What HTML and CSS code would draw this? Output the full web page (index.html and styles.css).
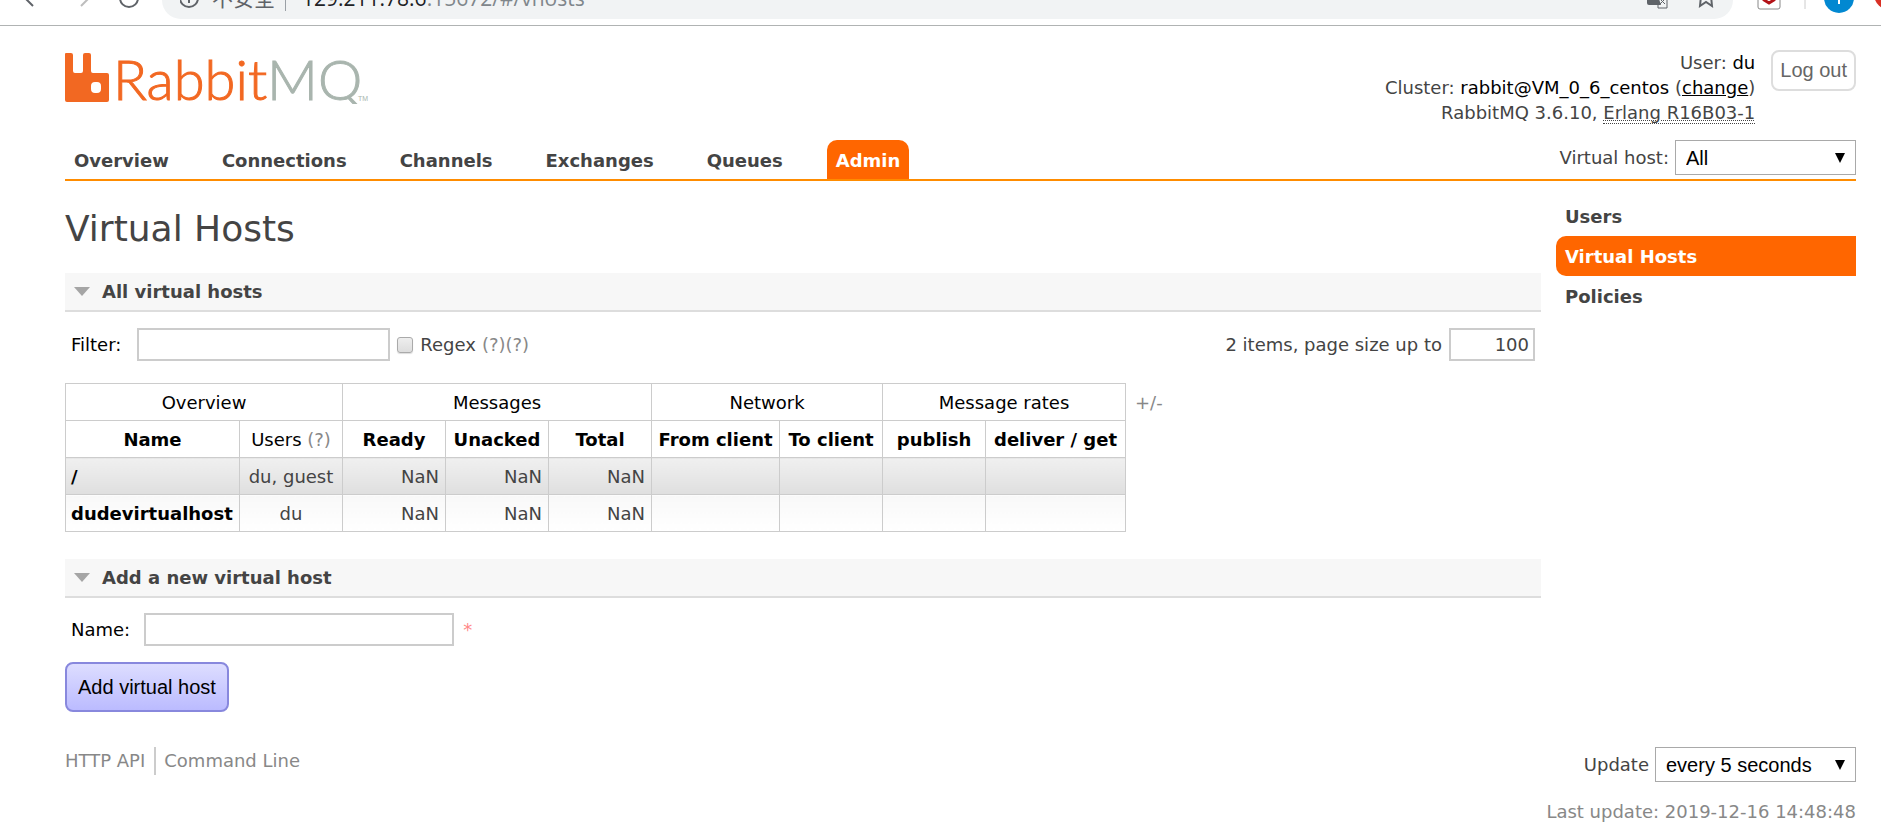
FILE: index.html
```html
<!DOCTYPE html>
<html lang="en">
<head>
<meta charset="utf-8">
<title>RabbitMQ Management</title>
<link rel="stylesheet" href="styles.css">
</head>
<body>
<div class="toolbar">
  <svg class="toolbar-nav" viewBox="0 0 150 20" width="150" height="20" fill="none" stroke-width="2" aria-hidden="true">
    <path d="M33 6L25-2" stroke="#5f6368"/>
    <path d="M81 6L89-2" stroke="#bdbdbd"/>
    <path d="M120-2A9 9 0 0 0 138-2" stroke="#5f6368"/>
  </svg>
  <div class="address">
    <svg class="info" viewBox="0 0 20 20" width="20" height="20" fill="none" stroke="#5f6368" stroke-width="2" aria-hidden="true">
      <circle cx="9" cy="-2" r="9"/><path d="M9-2V3"/>
    </svg>
    <span class="address-text"><span class="insecure">不安全</span><span class="bar"></span><span class="host">129.211.78.6</span>:15672/#/vhosts</span>
    <svg class="address-icons" viewBox="0 0 80 20" width="80" height="20" aria-hidden="true">
      <path d="M0-4H11L14 5H2Q0 5 0 3Z" fill="#5f6368"/><path d="M13 4L17 0M13-1L18 4M11 5V8H20V-2" fill="none" stroke="#5f6368"/>
      <path d="M54-4L53 6L59 2L65 6L64-4" fill="none" stroke="#5f6368" stroke-width="2"/>
    </svg>
  </div>
  <svg class="toolbar-extras" viewBox="0 0 148 20" width="148" height="20" aria-hidden="true">
    <path d="M25-2V7Q25 9 27 9H45Q47 9 47 7V-2" fill="none" stroke="#888"/>
    <path d="M31-2V0L36 3L41 0V-2" fill="none" stroke="#b31217" stroke-width="3"/>
    <path d="M72 0V9" stroke="#ccc"/>
    <circle cx="106" cy="-2" r="15" fill="#0288d1"/><path d="M106-2V4" stroke="#fff" stroke-width="2"/>
    <circle cx="157" cy="-6" r="16" fill="#d93025"/>
  </svg>
</div>

<div class="page">
  <header class="header">
    <svg class="logo" viewBox="0 0 304 54" width="304" height="54" role="img" aria-label="RabbitMQ">
      <path fill="#f26822" fill-rule="evenodd" d="M0 4Q0 3 1 3H6Q8 3 8 5V21Q8 23 10 23H16Q18 23 18 21V5Q18 3 20 3H24Q26 3 26 5V21Q26 23 28 23H42Q44 23 44 25V50Q44 52 42 52H2Q0 52 0 50ZM30 32Q26 32 26 36V39Q26 43 30 43H32Q36 43 36 39V36Q36 32 32 32Z"/>
      <text class="wordmark" x="48" y="50"><tspan class="rabbit">Rabbit</tspan><tspan class="mq">MQ</tspan></text>
      <text class="tm" x="293" y="51">TM</text>
    </svg>
    <div class="session">
      <ul class="status">
        <li>User: <b>du</b></li>
        <li>Cluster: <b>rabbit@VM_0_6_centos</b> (<a href="#">change</a>)</li>
        <li>RabbitMQ 3.6.10, <abbr title="Erlang version">Erlang R16B03-1</abbr></li>
      </ul>
      <button class="logout" type="button">Log out</button>
    </div>
  </header>

  <div class="menu">
    <nav class="tabs">
      <a href="#">Overview</a><a href="#">Connections</a><a href="#">Channels</a><a href="#">Exchanges</a><a href="#">Queues</a><a class="selected" href="#">Admin</a>
    </nav>
    <div class="picker">
      <label for="vhost">Virtual host:</label>
      <select id="vhost" class="vhost"><option>All</option></select>
    </div>
  </div>

  <div class="body">
    <main class="main">
      <h1>Virtual Hosts</h1>
      <h2>All virtual hosts</h2>
      <div class="filter">
        <label class="dark" for="filter">Filter:</label>
        <input id="filter" class="box filter-box" type="text">
        <input id="regex" class="check" type="checkbox">
        <label for="regex">Regex</label>
        <span class="help">(?)(?)</span>
        <label class="size-label" for="size">2 items, page size up to</label>
        <input id="size" class="box size-box" type="text" value="100">
      </div>
      <div class="list">
        <table>
          <colgroup><col class="c-name"><col class="c-std"><col class="c-std"><col class="c-std"><col class="c-std"><col class="c-from"><col class="c-std"><col class="c-std"><col class="c-get"></colgroup>
          <thead>
            <tr class="groups"><th colspan="2">Overview</th><th colspan="3">Messages</th><th colspan="2">Network</th><th colspan="2">Message rates</th></tr>
            <tr><th>Name</th><th class="plain">Users <span class="help">(?)</span></th><th>Ready</th><th>Unacked</th><th>Total</th><th>From client</th><th>To client</th><th>publish</th><th>deliver / get</th></tr>
          </thead>
          <tbody>
            <tr class="odd"><td><a href="#">/</a></td><td class="c">du, guest</td><td class="r">NaN</td><td class="r">NaN</td><td class="r">NaN</td><td></td><td></td><td></td><td></td></tr>
            <tr class="even"><td><a href="#">dudevirtualhost</a></td><td class="c">du</td><td class="r">NaN</td><td class="r">NaN</td><td class="r">NaN</td><td></td><td></td><td></td><td></td></tr>
          </tbody>
        </table>
        <a class="columns" href="#">+/-</a>
      </div>
      <h2>Add a new virtual host</h2>
      <form class="add">
        <div class="field">
          <label class="dark" for="name">Name:</label>
          <input id="name" class="box name-box" type="text">
          <span class="required">*</span>
        </div>
        <button class="submit" type="button">Add virtual host</button>
      </form>
    </main>
    <nav class="side">
      <a href="#">Users</a>
      <a class="selected" href="#">Virtual Hosts</a>
      <a href="#">Policies</a>
    </nav>
  </div>

  <footer class="footer">
    <div class="links"><a href="#">HTTP API</a><a href="#">Command Line</a></div>
    <div class="update">
      <div class="picker">
        <label for="interval">Update</label>
        <select id="interval" class="interval"><option>every 5 seconds</option></select>
      </div>
      <div class="last">Last update: 2019-12-16 14:48:48</div>
    </div>
  </footer>
</div>
</body>
</html>
```
FILE: styles.css
```css
* { box-sizing: border-box; }
body { margin: 0; background: #fff; color: #444; font: 18px/25px Verdana, "DejaVu Sans", sans-serif; }
a { text-decoration: none; }
button, select { font-family: Arial, "Liberation Sans", sans-serif; font-size: 20px; }

.toolbar { display: flex; height: 26px; overflow: hidden; border-bottom: 1px solid #b0b3b3; }
.toolbar svg { flex: none; }
.address { display: flex; flex: 1; height: 19px; margin-left: 12px; padding: 0 6px 0 18px; background: #f1f3f4; border-radius: 0 0 19px 19px; }
.address-text { display: flex; flex: 1; height: 11px; align-items: flex-end; margin-left: 12px; color: #80868b; font: 21px/26px "Open Sans", "Noto Sans CJK SC", sans-serif; }
.insecure { color: #5f6368; }
.host { color: #202124; }
.bar { width: 1px; height: 12px; margin: 0 16px 0 10px; background: #9aa0a6; }

.page { padding: 24px 25px 0 65px; }
.header { display: flex; justify-content: space-between; height: 90px; }
.wordmark { font: 300 56px Lato, sans-serif; stroke-width: 1px; }
.rabbit { fill: #f26822; stroke: #f26822; }
.mq { fill: #a9b5ae; stroke: #a9b5ae; }
.tm { font: 7px "Liberation Sans", sans-serif; fill: #a9b5ae; }
.session { display: flex; align-items: flex-start; gap: 16px; }
.status { margin: 0; padding: 0; list-style: none; text-align: right; }
.status b, .status a { color: #000; font-weight: normal; }
.status a { text-decoration: underline; }
.status abbr { text-decoration: underline dotted 1px; border-bottom: 1px dotted #444; }
.logout { padding: 6px 7px; line-height: 25px; border: 2px solid #ddd; border-radius: 8px; background: #fff; color: #666; }

.menu { display: flex; justify-content: space-between; border-bottom: 2px solid #ff8c00; }
.tabs { display: flex; gap: 35px; font-weight: bold; }
.tabs a { height: 39px; padding: 8px 9px 6px; color: #444; border-radius: 10px 10px 0 0; }
.tabs .selected { background: #f60; color: #fff; }
.picker { display: flex; align-items: flex-start; gap: 6px; line-height: 35px; }
select {
  appearance: none;
  height: 35px;
  padding: 0 10px;
  border: 1px solid #a9a9a9;
  border-radius: 0;
  color: #000;
  background: #fff url("data:image/svg+xml,%3Csvg xmlns='http://www.w3.org/2000/svg' width='10' height='10'%3E%3Cpath d='M0 0H10L5 10Z'/%3E%3C/svg%3E") no-repeat right 10px center;
}
.vhost { width: 181px; }
.interval { width: 201px; }

.body { display: flex; gap: 15px; }
.main { flex: 1; }
h1 { margin: 26px 0 22px; font-size: 36px; line-height: 44px; font-weight: normal; }
h2 { display: flex; align-items: center; margin: 0; padding: 6px 10px 6px 9px; border-bottom: 2px solid #ddd; background: #f7f7f7; font-size: 18px; line-height: 25px; }
h2::before { content: ""; margin-right: 12px; border: solid transparent; border-width: 9px 8px 0; border-top-color: #a5a5a5; }
.side { width: 300px; padding-top: 15px; font-weight: bold; }
.side a { display: block; padding: 8px 9px 7px; color: #444; }
.side .selected { background: #f60; color: #fff; border-radius: 10px 0 0 10px; }

.dark { color: #000; }
.help { color: #888; }
.box { height: 33px; padding: 4px; border: 2px solid #ccc; background: #fff; font: 18px Verdana, "DejaVu Sans", sans-serif; color: #444; }
.filter { display: flex; align-items: center; margin-top: 16px; padding: 0 6px; }
.filter-box { width: 253px; margin-left: 16px; }
.check { appearance: none; width: 16px; height: 16px; margin: 0 7px; border: 1px solid #aaa; border-radius: 3px; background: linear-gradient(#eee, #ddd); box-shadow: 0 1px 1px #ddd; }
.filter .help { margin-left: 6px; }
.size-label { margin-left: auto; margin-right: 7px; }
.size-box { width: 86px; text-align: right; }
.list { display: flex; align-items: flex-start; gap: 9px; margin: 22px 0 27px; }
table { width: 1060px; table-layout: fixed; border-collapse: collapse; }
.c-name { width: 174px; }
.c-std { width: 103px; }
.c-from { width: 128px; }
.c-get { width: 140px; }
th, td { height: 37px; padding: 5px; border: 1px solid #ccc; white-space: nowrap; }
th { padding: 0; color: #000; }
.groups th, .plain { font-weight: normal; }
td a { color: #000; font-weight: bold; }
.c { text-align: center; }
.r { padding-right: 6px; text-align: right; }
.odd td { background: linear-gradient(#f0f0f0, #dfdfdf); }
.even td { background: linear-gradient(#f8f8f8, #fff); }
.columns { color: #888; padding-top: 7px; }
.add { padding-top: 15px; }
.field { display: flex; align-items: center; padding-left: 6px; }
.name-box { width: 310px; margin: 0 9px 0 14px; }
.required { color: #f88; }
.submit { display: block; margin-top: 16px; padding: 11px; line-height: 24px; border: 2px solid #88d; border-radius: 8px; background: linear-gradient(#ddf, #bbf); color: #000; }

.footer { display: flex; justify-content: space-between; margin-top: 35px; color: #888; }
.links { display: flex; align-items: flex-start; }
.links a { padding-right: 9px; line-height: 28px; color: #888; }
.links a + a { padding-left: 8px; border-left: 2px solid #ccc; }
.update .picker { justify-content: flex-end; color: #444; }
.last { margin-top: 17px; }
```
